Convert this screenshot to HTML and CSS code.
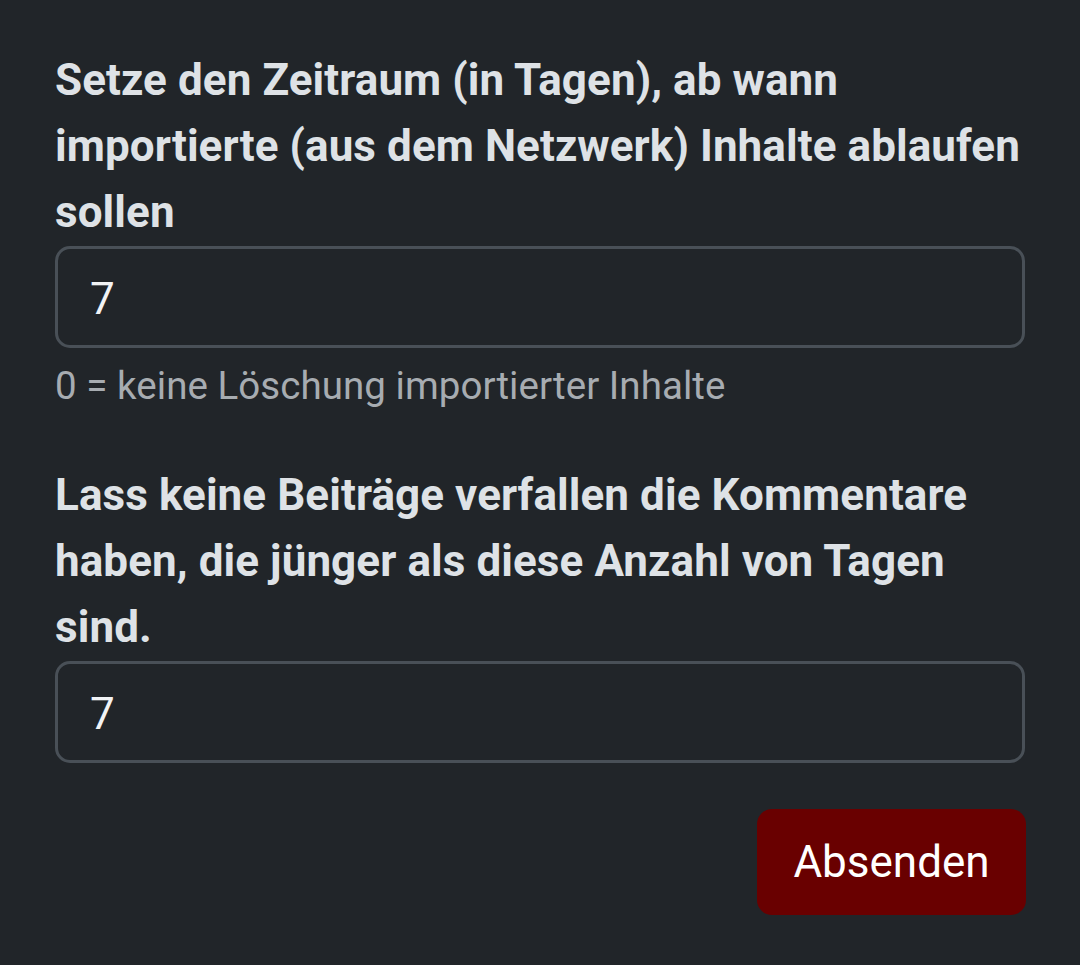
FILE: index.html
```html
<!DOCTYPE html>
<html lang="de">
<head>
<meta charset="utf-8">
<title>Einstellungen</title>
<link rel="stylesheet" href="styles.css">
</head>
<body>
<form class="settings">
  <div class="group">
    <label class="label" for="expire">Setze den Zeitraum (in Tagen), ab wann importierte (aus dem Netzwerk) Inhalte ablaufen sollen</label>
    <input class="field" id="expire" type="text" value="7">
    <div class="help">0 = keine Löschung importierter Inhalte</div>
  </div>
  <div class="group second">
    <label class="label" for="comments">Lass keine Beiträge verfallen die Kommentare haben, die jünger als diese Anzahl von Tagen sind.</label>
    <input class="field" id="comments" type="text" value="7">
  </div>
  <div class="actions">
    <button class="submit" type="button">Absenden</button>
  </div>
</form>
</body>
</html>
```

FILE: styles.css
```css
html, body {
  margin: 0;
  padding: 0;
  background: #212529;
}
body {
  font-family: Roboto, "Liberation Sans", sans-serif;
  color: #dee2e6;
}
.settings {
  padding: 47px 55px 40px 55px;
  display: flex;
  flex-direction: column;
}
.group {
  display: flex;
  flex-direction: column;
}
.second {
  margin-top: 47px;
}
.label {
  font-size: 44px;
  line-height: 66px;
  font-weight: 700;
  letter-spacing: 0.08px;
  color: #dee2e6;
  margin-bottom: 1px;
}
.field {
  box-sizing: border-box;
  height: 102px;
  width: 100%;
  border: 3px solid #495057;
  border-radius: 15px;
  background: #212529;
  color: #f1f3f5;
  font-family: Roboto, "Liberation Sans", sans-serif;
  font-size: 44px;
  font-weight: 400;
  padding: 4px 32px 0 32px;
  outline: none;
}
.help {
  margin-top: 9px;
  font-size: 38.5px;
  line-height: 58px;
  letter-spacing: 0.05px;
  color: #a7acb1;
}
.actions {
  display: flex;
  justify-content: flex-end;
  margin-top: 46px;
}
.submit {
  box-sizing: border-box;
  height: 106px;
  width: 269px;
  margin-right: -1px;
  border: none;
  border-radius: 15px;
  background: #690000;
  color: #ffffff;
  font-family: Roboto, "Liberation Sans", sans-serif;
  font-size: 44px;
  padding: 0;
}
```
